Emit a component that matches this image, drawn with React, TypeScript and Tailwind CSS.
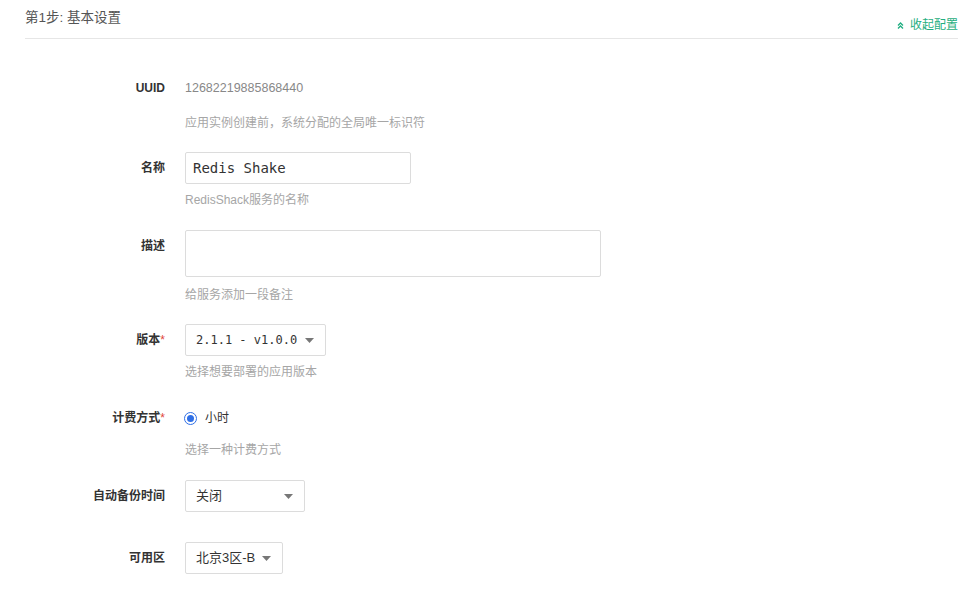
import type { ReactNode } from 'react'

const cn = "'Liberation Sans', 'Noto Sans CJK SC', sans-serif"
const mono = "'DejaVu Sans Mono', 'Noto Sans CJK SC', monospace"

function Caret() {
  return (
    <svg width="9" height="5" viewBox="0 0 9 5" className="shrink-0">
      <path d="M0 0h9L4.5 5z" fill="#777" />
    </svg>
  )
}

function Label({ text, required, h }: { text: string; required?: boolean; h: string }) {
  return (
    <div className={`w-[165px] shrink-0 flex items-center justify-end text-[12px] font-bold text-[#333] ${h}`}>
      {text}
      {required && <span className="text-[#e0463a] font-normal">*</span>}
    </div>
  )
}

function Row({ label, required, h, mt, children }: { label: string; required?: boolean; h: string; mt: string; children: ReactNode }) {
  return (
    <div className={`flex ${mt}`}>
      <Label text={label} required={required} h={h} />
      <div className="ml-[20px] flex flex-col">{children}</div>
    </div>
  )
}

function Help({ text, mt }: { text: string; mt: string }) {
  return <div className={`text-[12px] leading-4 text-[#a6a6a6] ${mt}`}>{text}</div>
}

function Select({ text, w, isMono }: { text: string; w: string; isMono?: boolean }) {
  return (
    <div className={`flex h-8 items-center justify-between rounded-[2px] border border-[#dcdcdc] bg-white pl-[10px] pr-[11px] ${w}`}>
      <span
        className={isMono ? 'whitespace-nowrap text-[12px] text-[#333]' : 'whitespace-nowrap text-[13px] text-[#333]'}
        style={{ fontFamily: isMono ? mono : cn }}
      >
        {text}
      </span>
      <Caret />
    </div>
  )
}

export default function App() {
  return (
    <div className="min-h-[589px] w-[968px] bg-white pt-[9px]" style={{ fontFamily: cn }}>
      <div className="ml-[25px] flex w-[933px] items-end justify-between border-b border-[#e6e6e6] pb-[5px]">
        <div className="mb-[6px] text-[13.5px] leading-[18px] text-[#555]">第1步: 基本设置</div>
        <div className="flex items-center gap-[6px] text-[12px] leading-4 text-[#1fae80]">
          <svg width="7" height="7" viewBox="0 0 7 7">
            <path d="M1 3.5L3.5 1L6 3.5M1 6.5L3.5 4L6 6.5" stroke="#1fae80" strokeWidth="1.3" fill="none" />
          </svg>
          收起配置
        </div>
      </div>

      <Row label="UUID" h="h-5" mt="mt-[39px]">
        <div className="text-[12.5px] leading-5 text-[#888]">12682219885868440</div>
        <Help text="应用实例创建前，系统分配的全局唯一标识符" mt="mt-[17px]" />
      </Row>

      <Row label="名称" h="h-8" mt="mt-[21px]">
        <div className="flex h-8 w-[226px] items-center rounded-[2px] border border-[#dcdcdc] px-[7px]">
          <span className="text-[14px] text-[#333]" style={{ fontFamily: mono }}>Redis Shake</span>
        </div>
        <Help text="RedisShack服务的名称" mt="mt-[8px]" />
      </Row>

      <Row label="描述" h="h-8" mt="mt-[22px]">
        <div className="h-[47px] w-[416px] rounded-[2px] border border-[#dcdcdc]" />
        <Help text="给服务添加一段备注" mt="mt-[10px]" />
      </Row>

      <Row label="版本" required h="h-8" mt="mt-[21px]">
        <Select text="2.1.1 - v1.0.0" w="w-[141px]" isMono />
        <Help text="选择想要部署的应用版本" mt="mt-[8px]" />
      </Row>

      <Row label="计费方式" required h="h-5" mt="mt-[28px]">
        <div className="flex h-5 items-center">
          <span className="ml-[-1px] flex h-[13px] w-[13px] items-center justify-center rounded-full border border-[#2f6fe6]">
            <span className="h-[7px] w-[7px] rounded-full bg-[#2f6fe6]" />
          </span>
          <span className="ml-[8px] text-[12px] text-[#333]">小时</span>
        </div>
        <Help text="选择一种计费方式" mt="mt-[14px]" />
      </Row>

      <Row label="自动备份时间" h="h-8" mt="mt-[22px]">
        <Select text="关闭" w="w-[120px]" />
      </Row>

      <Row label="可用区" h="h-8" mt="mt-[30px]">
        <Select text="北京3区-B" w="w-[98px]" />
      </Row>
    </div>
  )
}
